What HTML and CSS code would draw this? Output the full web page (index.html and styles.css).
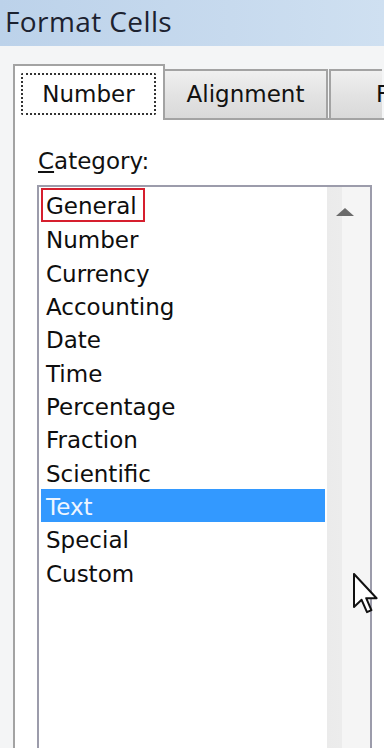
FILE: index.html
```html
<!DOCTYPE html>
<html lang="en">
<head>
    <meta charset="UTF-8">
    <meta name="viewport" content="width=device-width, initial-scale=1.0">
    <title>Format Cells</title>
    <link rel="stylesheet" href="styles.css">
</head>
<body>
    <div class="titlebar">Format Cells</div>

    <div class="dialog">
        <div class="tabs">
            <div class="tab active"><span class="focus">Number</span></div>
            <div class="tab">Alignment</div>
            <div class="tab last">F</div>
        </div>

        <div class="panel">
            <div class="label"><u>C</u>ategory:</div>
            <div class="listbox">
                <ul class="items">
                    <li><span class="marked">General</span></li>
                    <li>Number</li>
                    <li>Currency</li>
                    <li>Accounting</li>
                    <li>Date</li>
                    <li>Time</li>
                    <li>Percentage</li>
                    <li>Fraction</li>
                    <li>Scientific</li>
                    <li class="selected">Text</li>
                    <li>Special</li>
                    <li>Custom</li>
                </ul>
                <div class="scrollbar">
                    <div class="scroll-up">
                        <svg width="18" height="8" viewBox="0 0 18 8">
                            <path d="M9 0 L18 8 L0 8 Z" fill="#6b6b6b" />
                        </svg>
                    </div>
                </div>
            </div>
        </div>
    </div>

    <svg class="cursor" width="26" height="42" viewBox="0 0 13 21">
        <path d="M0.5 0.5 L0.5 17 L4.3 13.4 L7 19.6 L9.2 18.6 L6.6 12.6 L11.8 12.6 Z" fill="#fff" stroke="#111" stroke-width="1" stroke-linejoin="round" />
    </svg>
</body>
</html>
```

FILE: styles.css
```css
body {
    margin: 0;
    width: 384px;
    height: 748px;
    overflow: hidden;
    background-color: #f4f5f6;
    font-family: 'DejaVu Sans', sans-serif;
    position: relative;
}

.titlebar {
    height: 46px;
    line-height: 43px;
    padding-left: 5px;
    font-family: 'Open Sans', sans-serif;
    font-size: 28px;
    letter-spacing: 0.4px;
    color: #1c2230;
    background: linear-gradient(to right, #bcd2ea, #c7daee 60%, #cfe0f1);
    white-space: nowrap;
}

.dialog {
    padding: 18px 0 0 13px;
}

.tabs {
    display: flex;
    align-items: flex-end;
    height: 54px;
    white-space: nowrap;
}

.tab {
    box-sizing: border-box;
    height: 49px;
    width: 163px;
    flex-shrink: 0;
    border: 2px solid #a3a3a3;
    border-bottom: none;
    border-left: none;
    background: linear-gradient(to bottom, #f0f0f0, #e3e3e3 50%, #d9d9d9);
    font-size: 23px;
    line-height: 46px;
    color: #111;
    text-align: center;
}

.tab.last {
    width: 53px;
    margin-left: 1px;
    border-left: 2px solid #a3a3a3;
    border-right: none;
    text-align: left;
    padding-left: 45px;
}

.tab.active {
    width: 152px;
    border-left: 2px solid #a3a3a3;
    background-color: #fff;
    background-image: none;
    position: relative;
    z-index: 1;
    margin-bottom: -2px;
    height: 56px;
    padding: 7px 7px 5px 6px;
}

.focus {
    display: block;
    height: 100%;
    box-sizing: border-box;
    border: 2px dotted #333;
    border-radius: 2px;
    line-height: 39px;
}

.panel {
    box-sizing: border-box;
    height: 630px;
    background-color: #fff;
    border-left: 2px solid #a3a3a3;
    border-top: 2px solid #a3a3a3;
    padding: 28px 0 0 22px;
}

.label {
    font-size: 23px;
    line-height: 27px;
    color: #111;
    margin-left: 1px;
}

.listbox {
    margin-top: 10px;
    width: 335px;
    height: 563px;
    box-sizing: border-box;
    border: 2px solid #9c9cab;
    border-bottom: none;
    display: flex;
    padding-left: 2px;
}

.items {
    list-style: none;
    margin: 0 2px 0 0;
    padding: 2px 0 0 0;
    width: 284px;
}

.items li {
    height: 33.33px;
    line-height: 37px;
    padding-left: 5px;
    font-size: 23px;
    color: #0e0e0e;
}

.items li.selected {
    background-color: #3399ff;
    color: #eef5ff;
}

.marked {
    display: inline-block;
    margin-left: -5px;
    padding: 0 6px 0 3px;
    height: 30px;
    line-height: 32px;
    border: 2.5px solid #d61f2e;
    margin-top: -1px;
    vertical-align: top;
}

.scrollbar {
    flex: 1;
    background: linear-gradient(to right, #ebebeb, #ececec 34%, #f5f5f5 36%, #f5f5f5);
}

.scroll-up {
    height: 42px;
    display: flex;
    justify-content: center;
    padding-top: 21px;
    box-sizing: border-box;
    margin-left: -7px;
}

.cursor {
    position: absolute;
    left: 353px;
    top: 573px;
}
```
